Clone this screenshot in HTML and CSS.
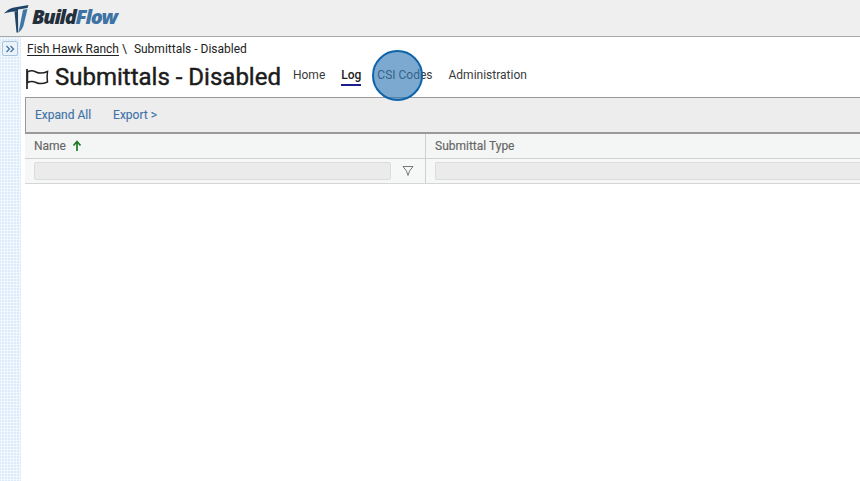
FILE: index.html
```html
<!DOCTYPE html>
<html lang="en">
<head>
<meta charset="utf-8">
<title>Submittals - Disabled</title>
<link rel="stylesheet" href="styles.css">
</head>
<body>
<header class="topbar">
  <svg class="logo-mark" viewBox="0 0 25 28" width="25" height="28" aria-hidden="true">
    <path class="mark-dark" d="M0 8.500 C3 5 6 3 10 2.500 L24.500 0 L23.500 3 L19 3.800 L14 4.500 L14 6 L10 6.500 C7 6.800 3.500 7.500 0 8.500 Z"/>
    <path class="mark-dark" d="M10.500 6.500 L14 6 L14.200 27.500 L12.500 27.500 Z"/>
    <path class="mark-blue" d="M19 4.800 L23.500 4 L19.500 20.500 C18.500 24 16.500 26 14.500 27.500 Z"/>
  </svg>
  <span class="brand"><span class="brand-a">Build</span><span class="brand-b">Flow</span></span>
</header>
<div class="shell">
  <aside class="rail">
    <button class="rail-btn" type="button" aria-label="Expand">
      <svg viewBox="0 0 10 10" width="10" height="10" aria-hidden="true"><path d="M1.500 2 L4.500 5 L1.500 8 M5.500 2 L8.500 5 L5.500 8"/></svg>
    </button>
  </aside>
  <main class="content">
    <div class="crumbs"><a class="crumb-link">Fish Hawk Ranch</a><span class="crumb-sep">\</span><span>Submittals - Disabled</span></div>
    <div class="title-row">
      <svg class="flag" viewBox="0 0 24 24" width="24" height="24" aria-hidden="true">
        <path class="flag-pole" d="M2 2 V22"/>
        <path class="flag-cloth" d="M2.500 5 C6 3 8 3.500 11 5 C14 6.500 18 6.500 22.500 4.500 C22 8 22 12 22.500 15 C18 17 14 17 11 15.500 C8 14 5.500 14 2.500 15.500 Z"/>
      </svg>
      <h1 class="title">Submittals - Disabled</h1>
      <nav class="tabs">
        <a class="tab">Home</a>
        <a class="tab tab-active">Log</a>
        <a class="tab tab-csi">CSI Codes<span class="pointer"></span></a>
        <a class="tab">Administration</a>
      </nav>
    </div>
    <div class="toolbar">
      <a class="tool">Expand All</a>
      <a class="tool">Export &gt;</a>
    </div>
    <div class="grid-head">
      <div class="col col-name">Name
        <svg class="sort" viewBox="0 0 10 12" width="10" height="12" aria-hidden="true"><path d="M5 11 V2 M1.500 5.500 L5 1.500 L8.500 5.500"/></svg>
      </div>
      <div class="col col-type">Submittal Type</div>
    </div>
    <div class="grid-filter">
      <div class="cell cell-name">
        <span class="field"></span>
        <svg class="funnel" viewBox="0 0 12 12" width="12" height="12" aria-hidden="true"><path d="M1 1.500 H11 L7.500 6 L6 10.500 L4.500 6 Z"/></svg>
      </div>
      <div class="cell cell-type"><span class="field"></span></div>
    </div>
  </main>
</div>
</body>
</html>
```
FILE: styles.css
```css
* { box-sizing: border-box; }
html, body { margin: 0; height: 100%; overflow: hidden; }
body {
  width: 860px;
  height: 481px;
  background: #fff;
  color: #222;
  font-family: Roboto, "Liberation Sans", sans-serif;
}
.topbar {
  height: 37px;
  background: #efefef;
  border-bottom: 1px solid #a9a9a9;
  display: flex;
  align-items: flex-start;
  padding: 5px 0 0 4px;
}
.logo-mark { display: block; flex: none; }
.mark-dark { fill: #1f4465; }
.mark-blue { fill: #3d77a8; }
.brand {
  margin: 0 0 0 3px;
  font: italic 800 20px/24px "Open Sans", sans-serif;
  letter-spacing: -1.35px;
}
.brand-a { color: #23303c; }
.brand-b { color: #3f73a3; }
.shell { display: flex; height: 444px; }
.rail {
  width: 21px;
  flex: none;
  background-color: #dceafa;
  background-image: radial-gradient(#f0f7fe 1px, transparent 1.300px);
  background-size: 3px 3px;
  padding: 4px 0 0 2px;
}
.rail-btn {
  display: flex;
  align-items: center;
  justify-content: center;
  width: 16px;
  height: 15px;
  padding: 0;
  background: #eaf2fa;
  border: 1px solid #a9c4de;
  border-radius: 2px;
}
.rail-btn path { fill: none; stroke: #3d6f9f; stroke-width: 1.200; }
.content { flex: 1; min-width: 0; padding: 5px 0 0 4px; overflow: hidden; }
.crumbs { margin-left: 2px; height: 15px; font-size: 12px; line-height: 15px; color: #222; white-space: nowrap; }
.crumb-link { text-decoration: underline; text-underline-offset: 2px; }
.crumb-sep { margin: 0 7px 0 3px; }
.title-row { display: flex; align-items: center; height: 40px; }
.flag { margin: 3px 4px 0 0; flex: none; }
.flag-pole { fill: none; stroke: #222; stroke-width: 1.700; }
.flag-cloth { fill: none; stroke: #222; stroke-width: 1.500; }
.title { margin: 0 0 0 2px; font-size: 24px; font-weight: 400; line-height: 30px; color: #1c1c1c; -webkit-text-stroke: 0.45px #1c1c1c; white-space: nowrap; }
.tabs { display: flex; gap: 16px; margin: 0 0 2px 12px; font-size: 12px; color: #3a3a3a; }
.tab { line-height: 17px; white-space: nowrap; position: relative; }
.tab-active { font-weight: 500; color: #222; border-bottom: 2px solid #1c1c8c; }
.tab-csi { color: #3a3a3a; }
.pointer {
  position: absolute;
  left: -5px;
  top: -17px;
  width: 51px;
  height: 51px;
  border-radius: 50%;
  background: rgba(50, 120, 180, 0.64);
  border: 2.500px solid #0e64ab;
}
.toolbar {
  height: 37px;
  display: flex;
  align-items: center;
  gap: 22px;
  padding-left: 9px;
  background: #ededed;
  border: 1px solid #9a9a9a;
  border-right: 0;
  border-bottom-width: 2px;
  font-size: 12px;
  color: #3f73a8;
  -webkit-text-stroke: 0.15px #3f73a8;
}
.grid-head {
  display: flex;
  height: 25px;
  background: #f4f6f5;
  border-bottom: 1px solid #cfcfcf;
  font-size: 12px;
  color: #666;
}
.col { display: flex; align-items: center; padding-left: 9px; -webkit-text-stroke: 0.15px #666; }
.col-name { width: 401px; flex: none; border-right: 1px solid #cfcfcf; gap: 6px; }
.col-type { flex: 1; }
.sort path { fill: none; stroke: #1d7a22; stroke-width: 1.700; }
.grid-filter {
  display: flex;
  height: 25px;
  background: #f6f7f7;
  border-bottom: 1px solid #d6d6d6;
}
.cell { display: flex; align-items: center; padding-left: 9px; }
.cell-name { width: 401px; flex: none; border-right: 1px solid #cfcfcf; }
.cell-type { flex: 1; }
.field {
  display: block;
  height: 18px;
  background: #ebebeb;
  border: 1px solid #dcdcdc;
  border-radius: 2px;
}
.cell-name .field { width: 357px; }
.cell-type .field { width: 100%; border-right: 0; border-radius: 2px 0 0 2px; }
.funnel { margin-left: 11px; }
.funnel path { fill: none; stroke: #7a7a7a; stroke-width: 1; }
```
